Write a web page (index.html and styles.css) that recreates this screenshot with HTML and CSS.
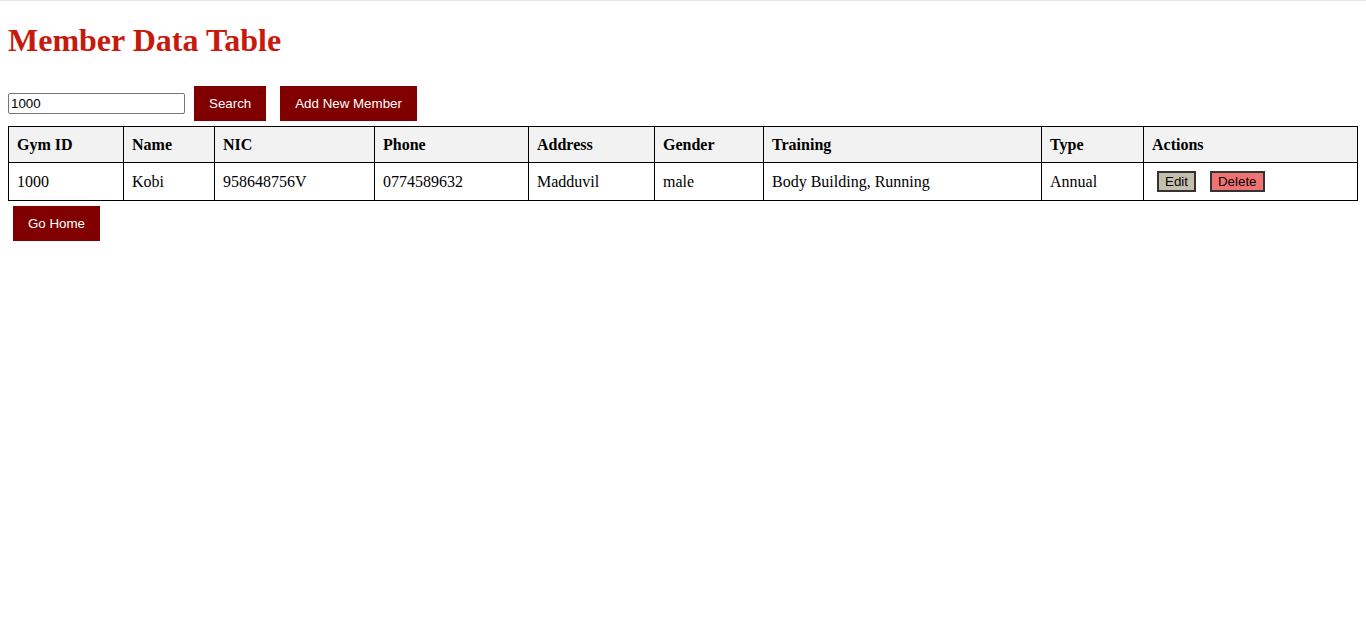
FILE: index.html
```html
<!DOCTYPE html>
<html>
<head>
<meta charset="utf-8">
<title>Member Data Table</title>
<link rel="stylesheet" href="styles.css">
</head>
<body>
<h1 class="title">Member Data Table</h1>
<div class="toolbar">
<input class="search-input" type="text" value="1000"> <button class="btn">Search</button> <button class="btn">Add New Member</button>
</div>
<table class="members">
<colgroup>
<col class="c1"><col class="c2"><col class="c3"><col class="c4"><col class="c5"><col class="c6"><col class="c7"><col class="c8"><col class="c9">
</colgroup>
<thead>
<tr>
<th>Gym ID</th><th>Name</th><th>NIC</th><th>Phone</th><th>Address</th><th>Gender</th><th>Training</th><th>Type</th><th>Actions</th>
</tr>
</thead>
<tbody>
<tr>
<td>1000</td><td>Kobi</td><td>958648756V</td><td>0774589632</td><td>Madduvil</td><td>male</td><td>Body Building, Running</td><td>Annual</td>
<td><button class="act edit">Edit</button> <button class="act delete">Delete</button></td>
</tr>
</tbody>
</table>
<button class="btn">Go Home</button>
</body>
</html>
```
FILE: styles.css
```css
html {
  border-top: 1px solid #e3e3e3;
}
body {
  margin: 0 8px 8px;
  font-family: "Liberation Serif", "Times New Roman", serif;
  font-size: 16px;
  color: #000;
  background: #fff;
}
.title {
  font-size: 32px;
  font-weight: bold;
  color: #c8190d;
  margin: 21.44px 0;
}
.toolbar {
  margin: 0;
}
.search-input {
  box-sizing: border-box;
  width: 177px;
  height: 21px;
  font-family: "Liberation Sans", Arial, sans-serif;
  font-size: 13.33px;
  padding: 1px 2px;
  border: 1px solid #767676;
  border-radius: 2px;
  margin: 0;
  vertical-align: baseline;
}
.btn {
  font-family: "Liberation Sans", Arial, sans-serif;
  font-size: 13.33px;
  background: #800000;
  color: #fff;
  border: none;
  padding: 10px 15px;
  margin: 5px;
  line-height: 15px;
  cursor: pointer;
}
.members {
  width: 100%;
  border-collapse: collapse;
  table-layout: fixed;
}
.c1 { width: 115px; }
.c2 { width: 91px; }
.c3 { width: 160px; }
.c4 { width: 154px; }
.c5 { width: 126px; }
.c6 { width: 109px; }
.c7 { width: 278px; }
.c8 { width: 102px; }
.members th,
.members td {
  border: 1px solid #000;
  padding: 8px;
  text-align: left;
  line-height: 19px;
}
.members th {
  background: #f2f2f2;
  font-weight: bold;
}
.act {
  font-family: "Liberation Sans", Arial, sans-serif;
  font-size: 13.33px;
  color: #000;
  border: 2px solid #333;
  padding: 1px 6px;
  margin: 0 5px;
  line-height: 15px;
}
.edit {
  background: #c6bead;
}
.delete {
  background: #f07373;
}
```
